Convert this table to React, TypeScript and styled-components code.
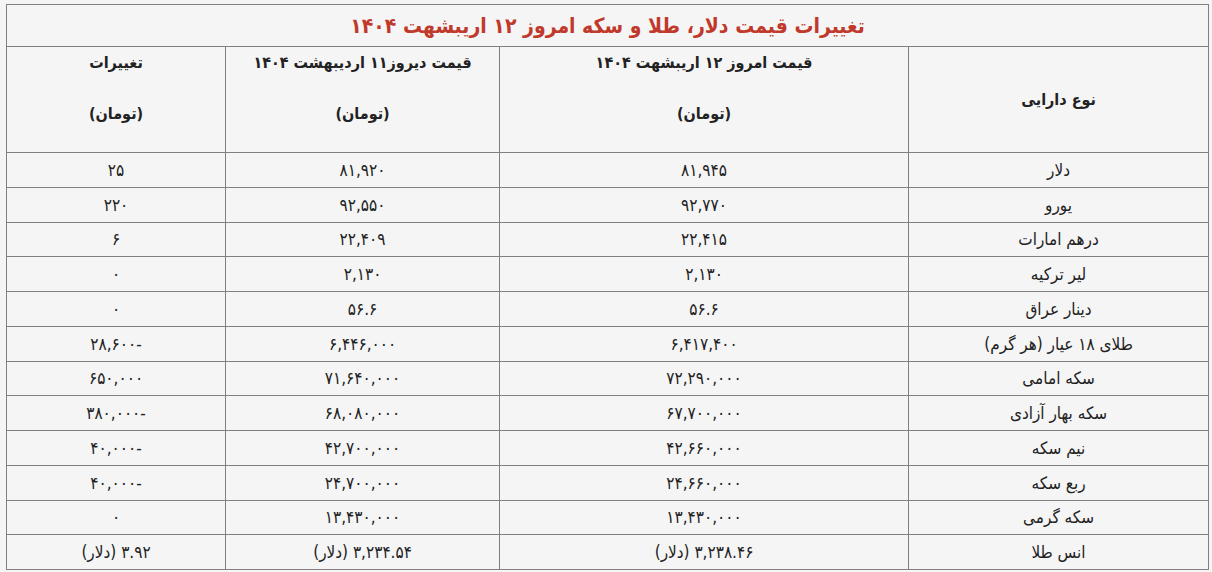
import styled, { createGlobalStyle } from 'styled-components';

const GlobalStyle = createGlobalStyle`
  html, body {
    margin: 0;
    padding: 0;
    background: #f5f5f5;
  }
  body {
    font-family: "DejaVu Sans Condensed", "DejaVu Sans", "Noto Sans", sans-serif;
    color: #222;
  }
`;

type Row = {
  asset: string;
  today: string;
  yesterday: string;
  change: string;
};

const rows: Row[] = [
  { asset: 'دلار', today: '۸۱,۹۴۵', yesterday: '۸۱,۹۲۰', change: '۲۵' },
  { asset: 'یورو', today: '۹۲,۷۷۰', yesterday: '۹۲,۵۵۰', change: '۲۲۰' },
  { asset: 'درهم امارات', today: '۲۲,۴۱۵', yesterday: '۲۲,۴۰۹', change: '۶' },
  { asset: 'لیر ترکیه', today: '۲,۱۳۰', yesterday: '۲,۱۳۰', change: '۰' },
  { asset: 'دینار عراق', today: '۵۶.۶', yesterday: '۵۶.۶', change: '۰' },
  { asset: 'طلای ۱۸ عیار (هر گرم)', today: '۶,۴۱۷,۴۰۰', yesterday: '۶,۴۴۶,۰۰۰', change: '-۲۸,۶۰۰' },
  { asset: 'سکه امامی', today: '۷۲,۲۹۰,۰۰۰', yesterday: '۷۱,۶۴۰,۰۰۰', change: '۶۵۰,۰۰۰' },
  { asset: 'سکه بهار آزادی', today: '۶۷,۷۰۰,۰۰۰', yesterday: '۶۸,۰۸۰,۰۰۰', change: '-۳۸۰,۰۰۰' },
  { asset: 'نیم سکه', today: '۴۲,۶۶۰,۰۰۰', yesterday: '۴۲,۷۰۰,۰۰۰', change: '-۴۰,۰۰۰' },
  { asset: 'ربع سکه', today: '۲۴,۶۶۰,۰۰۰', yesterday: '۲۴,۷۰۰,۰۰۰', change: '-۴۰,۰۰۰' },
  { asset: 'سکه گرمی', today: '۱۳,۴۳۰,۰۰۰', yesterday: '۱۳,۴۳۰,۰۰۰', change: '۰' },
  { asset: 'انس طلا', today: '۳,۲۳۸.۴۶ (دلار)', yesterday: '۳,۲۳۴.۵۴ (دلار)', change: '۳.۹۲ (دلار)' },
];

function App() {
  return (
    <>
      <GlobalStyle />
      <Page>
        <PriceTable dir="rtl">
          <colgroup>
            <col style={{ width: 300 }} />
            <col style={{ width: 409 }} />
            <col style={{ width: 274 }} />
            <col style={{ width: 219 }} />
          </colgroup>
          <thead>
            <tr>
              <TitleCell colSpan={4}>تغییرات قیمت دلار، طلا و سکه امروز ۱۲ اریبشهت ۱۴۰۴</TitleCell>
            </tr>
            <tr>
              <HeadCell $middle>نوع دارایی</HeadCell>
              <HeadCell>
                <HeadLine>قیمت امروز ۱۲ اریبشهت ۱۴۰۴</HeadLine>
                <HeadLine $second>(تومان)</HeadLine>
              </HeadCell>
              <HeadCell>
                <HeadLine>قیمت دیروز۱۱ اردیبهشت ۱۴۰۴</HeadLine>
                <HeadLine $second>(تومان)</HeadLine>
              </HeadCell>
              <HeadCell>
                <HeadLine>تغییرات</HeadLine>
                <HeadLine $second>(تومان)</HeadLine>
              </HeadCell>
            </tr>
          </thead>
          <tbody>
            {rows.map((row) => (
              <tr key={row.asset}>
                <Cell>{row.asset}</Cell>
                <Cell>{row.today}</Cell>
                <Cell>{row.yesterday}</Cell>
                <Cell>{row.change}</Cell>
              </tr>
            ))}
          </tbody>
        </PriceTable>
      </Page>
    </>
  );
}

export default App;

const Page = styled.div`
  padding: 4px 3px 0 6px;
`;

const PriceTable = styled.table`
  width: 1203px;
  table-layout: fixed;
  border-collapse: collapse;
  background: #f5f5f5;
  td, th {
    border: 1px solid #808080;
  }
`;

const TitleCell = styled.th`
  height: 41px;
  padding: 0;
  text-align: center;
  vertical-align: middle;
  color: #c0392b;
  font-size: 21px;
  font-weight: bold;
  line-height: 24px;
`;

const HeadCell = styled.th<{ $middle?: boolean }>`
  height: ${({ $middle }) => ($middle ? '105px' : '101px')};
  padding: ${({ $middle }) => ($middle ? '0' : '4px 0 0')};
  text-align: center;
  vertical-align: ${({ $middle }) => ($middle ? 'middle' : 'top')};
  font-size: 16px;
  font-weight: bold;
  color: #222;
`;

const HeadLine = styled.div<{ $second?: boolean }>`
  line-height: 24px;
  margin-top: ${({ $second }) => ($second ? '27px' : '0')};
`;

const Cell = styled.td`
  height: 33.75px;
  padding: 0;
  text-align: center;
  vertical-align: middle;
  font-size: 17px;
  line-height: 20px;
  color: #222;
`;
